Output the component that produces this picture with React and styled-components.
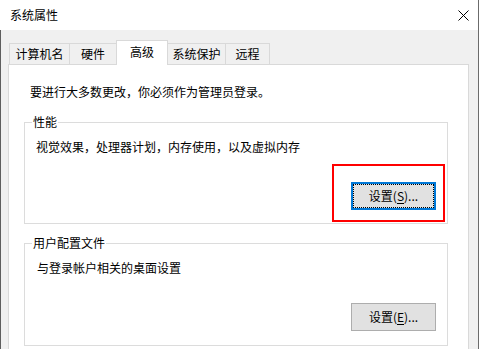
import React from 'react';
import styled, { createGlobalStyle } from 'styled-components';

const GlobalStyle = createGlobalStyle`
  html, body {
    margin: 0;
    padding: 0;
    background: #f0f0f0;
  }
  body {
    font-family: "Noto Sans CJK SC", "Noto Sans", sans-serif;
    font-size: 12px;
    color: #000;
  }
`;

const Window = styled.div`
  width: 479px;
  height: 349px;
  display: flex;
  flex-direction: column;
  overflow: hidden;
`;

const TitleBar = styled.div`
  flex: none;
  height: 30px;
  box-sizing: border-box;
  background: #fff;
  border-right: 1px solid #6b6b6b;
  display: flex;
  align-items: center;
  justify-content: space-between;
  padding-left: 10px;
`;

const Title = styled.span`
  line-height: 16px;
`;

const CloseButton = styled.div`
  width: 30px;
  height: 30px;
  display: flex;
  align-items: center;
  justify-content: center;
`;

const Body = styled.div`
  flex: 1;
  display: flex;
  flex-direction: column;
  background: #f0f0f0;
  border-left: 1px solid #5e5e5e;
  border-right: 1px solid #6b6b6b;
  padding: 10px 9px 0 7px;
`;

const TabStrip = styled.div`
  flex: none;
  height: 24px;
  display: flex;
  align-items: flex-end;
  padding-left: 1px;
`;

const Tab = styled.div`
  position: relative;
  box-sizing: border-box;
  width: ${p => p.$w}px;
  height: ${p => (p.$active ? 25 : 21)}px;
  margin-left: ${p => (p.$first ? 0 : -1)}px;
  margin-bottom: ${p => (p.$active ? -1 : 0)}px;
  padding-bottom: ${p => (p.$active ? 3 : 0)}px;
  z-index: ${p => (p.$active ? 1 : 0)};
  border: 1px solid #d9d9d9;
  border-bottom: none;
  background: ${p => (p.$active ? '#fff' : '#f0f0f0')};
  display: flex;
  align-items: center;
  justify-content: center;
  line-height: 16px;
  white-space: nowrap;
`;

const Panel = styled.div`
  flex: 1;
  background: #fff;
  border: 1px solid #d9d9d9;
  border-bottom: none;
  padding: 19px 20px 0 15px;
  display: flex;
  flex-direction: column;
`;

const Intro = styled.p`
  margin: 0 0 14px 6px;
  line-height: 16px;
`;

const GroupBox = styled.fieldset`
  margin: ${p => (p.$gap ? '11px 0 0' : '0')};
  padding: 0;
  min-width: 0;
  border: 1px solid #dcdcdc;
`;

const Legend = styled.legend`
  margin-left: 7px;
  padding: 0 1px;
  line-height: 16px;
`;

const GroupBody = styled.div`
  display: flex;
  flex-direction: column;
  padding: 9px 11px ${p => p.$bottom}px 11px;
`;

const GroupText = styled.div`
  line-height: 16px;
  padding-left: ${p => p.$indent || 0}px;
`;

const ButtonSlot = styled.div`
  position: relative;
  align-self: flex-end;
  margin-top: 27px;
`;

const Button = styled.button`
  box-sizing: border-box;
  width: 85px;
  height: 28px;
  margin: 0;
  padding: 0;
  font: inherit;
  line-height: 16px;
  color: #000;
  background: #e1e1e1;
  border: ${p => (p.$focused ? '2px solid #0078d7' : '1px solid #adadad')};
  outline: ${p => (p.$focused ? '1px dotted #000' : 'none')};
  outline-offset: -3px;
  display: flex;
  align-items: center;
  justify-content: center;

  u {
    text-decoration-thickness: 1px;
    text-underline-offset: 2px;
  }
`;

const Highlight = styled.span`
  position: absolute;
  left: -19px;
  top: -18px;
  width: 113px;
  height: 58px;
  box-sizing: border-box;
  border: 2px solid #ff0000;
  pointer-events: none;
`;

const tabs = [
  { label: '计算机名', w: 61 },
  { label: '硬件', w: 48 },
  { label: '高级', w: 52, active: true },
  { label: '系统保护', w: 59 },
  { label: '远程', w: 45 },
];

export default function App() {
  return (
    <>
      <GlobalStyle />
      <Window>
        <TitleBar>
          <Title>系统属性</Title>
          <CloseButton>
            <svg width="11" height="11" viewBox="0 0 11 11">
              <path d="M0.5 0.5 L10.5 10.5 M10.5 0.5 L0.5 10.5" stroke="#000" strokeWidth="1" />
            </svg>
          </CloseButton>
        </TitleBar>
        <Body>
          <TabStrip>
            {tabs.map((t, i) => (
              <Tab key={t.label} $w={t.w} $active={t.active} $first={i === 0}>
                {t.label}
              </Tab>
            ))}
          </TabStrip>
          <Panel>
            <Intro>要进行大多数更改，你必须作为管理员登录。</Intro>
            <GroupBox>
              <Legend>性能</Legend>
              <GroupBody $bottom={13}>
                <GroupText>视觉效果，处理器计划，内存使用，以及虚拟内存</GroupText>
                <ButtonSlot>
                  <Button $focused>
                    设置(<u>S</u>)...
                  </Button>
                  <Highlight />
                </ButtonSlot>
              </GroupBody>
            </GroupBox>
            <GroupBox $gap>
              <Legend>用户配置文件</Legend>
              <GroupBody $bottom={14}>
                <GroupText $indent={1}>与登录帐户相关的桌面设置</GroupText>
                <ButtonSlot>
                  <Button>
                    设置(<u>E</u>)...
                  </Button>
                </ButtonSlot>
              </GroupBody>
            </GroupBox>
          </Panel>
        </Body>
      </Window>
    </>
  );
}
